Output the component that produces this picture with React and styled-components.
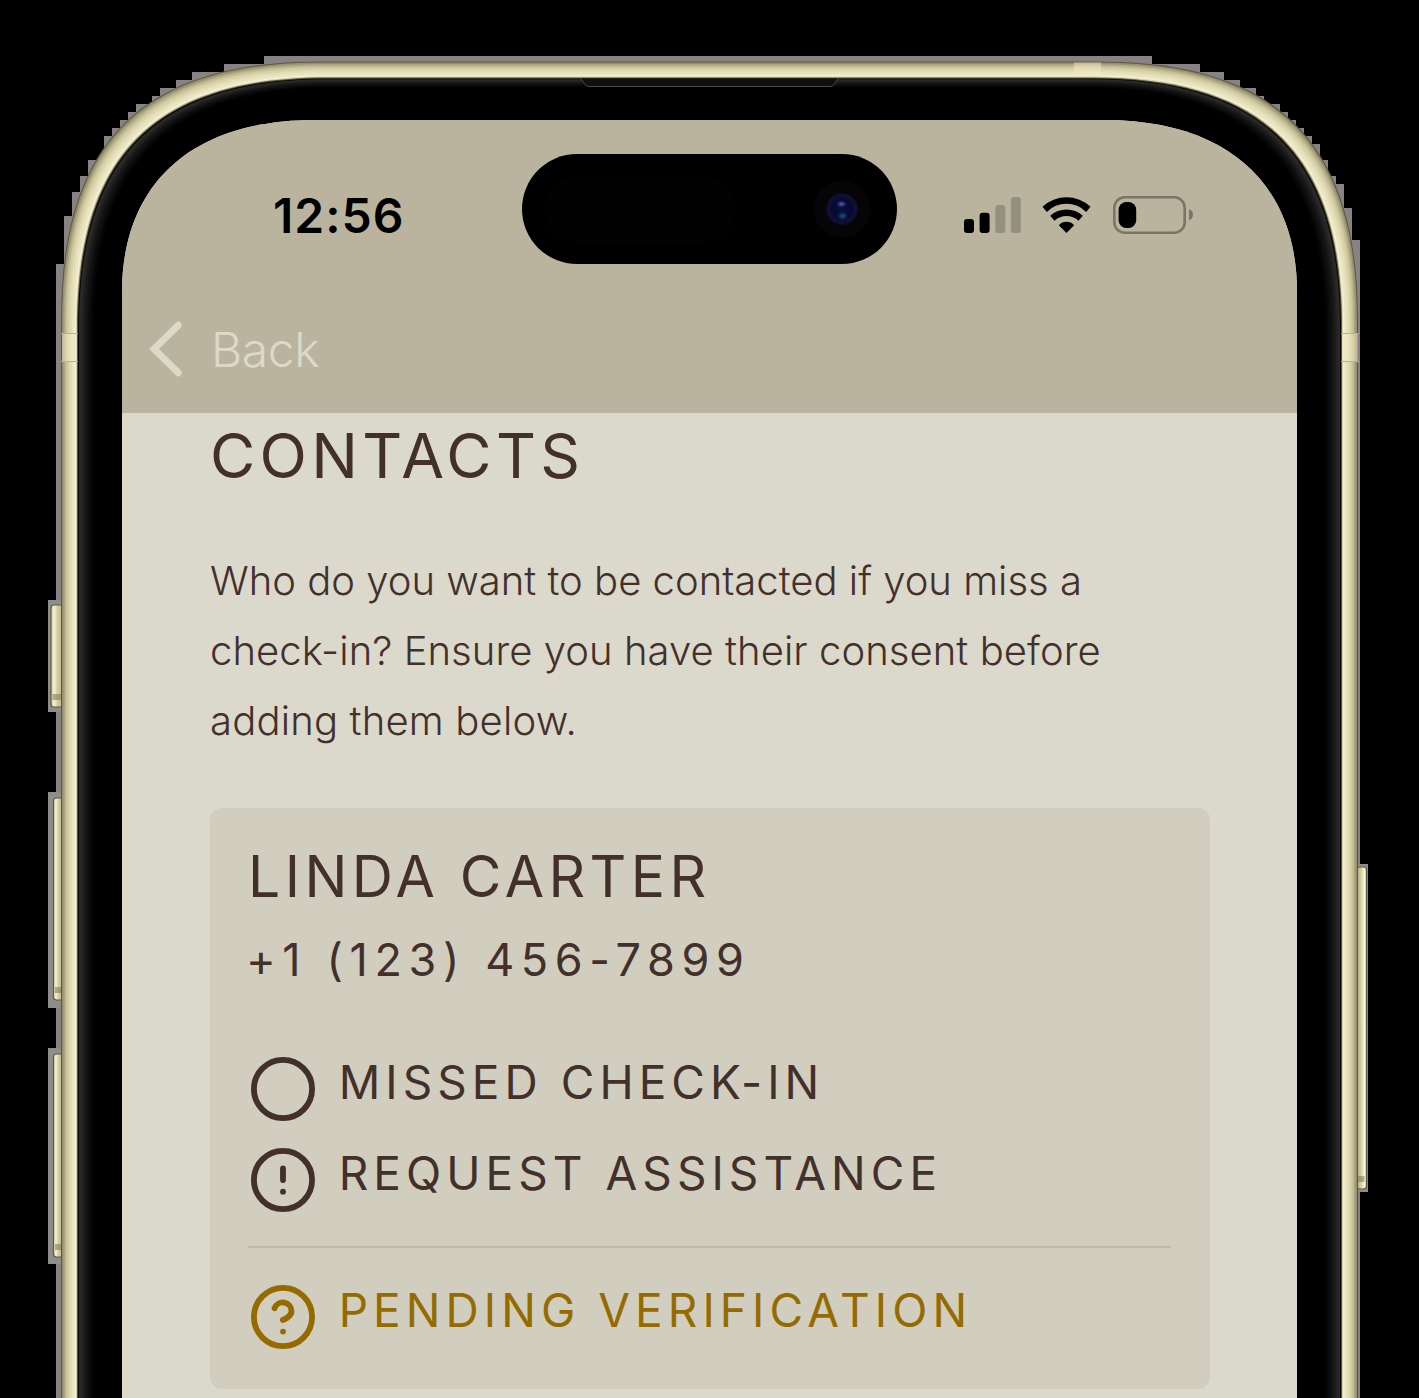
import React from 'react';
import styled, { createGlobalStyle } from 'styled-components';

const color = {
  header: '#bab49f',
  page: '#dbd8cc',
  card: '#d1cec0',
  ink: '#43302b',
  light: '#dcd9c9',
  pending: '#956b00',
  rule: '#bebbac',
};

const GlobalStyle = createGlobalStyle`
  * { box-sizing: border-box; }
  body {
    margin: 0;
    background: #000;
    overflow: hidden;
    font-family: Inter, "Liberation Sans", sans-serif;
  }
`;

const Stage = styled.main`
  position: relative;
  width: 1419px;
  height: 1398px;
  padding: 120px 122px 0;
  overflow: hidden;
  background: #000;
`;

const Backdrop = styled.svg`
  position: absolute;
  inset: 0;
  display: block;
`;

const Screen = styled.div`
  position: relative;
  height: 1278px;
  overflow: hidden;
  background: ${color.page};
  clip-path: path('M0 1278V172C0 68 65 0 193 0H982C1110 0 1175 68 1175 172V1278Z');
`;

const Header = styled.header`
  height: 293px;
  padding-top: 34px;
  background: ${color.header};
`;

const StatusBar = styled.div`
  display: grid;
  grid-template-columns: 400px 375px 400px;
  height: 110px;
`;

const StatusSlot = styled.div`
  display: flex;
  align-items: center;
  gap: ${(p) => p.$gap || 0}px;
  padding-top: ${(p) => p.$top}px;
  padding-left: ${(p) => p.$left}px;
`;

const Time = styled.time`
  font-size: 48px;
  font-weight: 600;
  line-height: 60px;
  letter-spacing: 1px;
  color: #000;
`;

const Island = styled.div`
  display: flex;
  align-items: center;
  justify-content: space-between;
  padding: 0 26px 0 22px;
  border-radius: 55px;
  background: #000;
`;

const Sensor = styled.span`
  width: 192px;
  height: 66px;
  border-radius: 33px;
  background: #020202;
`;

const Glyph = styled.svg`
  display: block;
  flex: none;
  overflow: visible;
`;

const BackButton = styled.button`
  display: flex;
  align-items: center;
  gap: 27px;
  height: 60px;
  margin: 55px 0 0 26px;
  padding: 0;
  border: 0;
  background: none;
  color: ${color.light};
  font: 350 48px/60px Inter, "Liberation Sans", sans-serif;
  letter-spacing: -0.4px;
`;

const BackLabel = styled.span`
  padding-top: 2px;
`;

const Content = styled.section`
  padding: 5px 87px 0 88px;
  color: ${color.ink};
`;

const Title = styled.h1`
  margin: 0 0 52px;
  font-size: 62px;
  font-weight: 400;
  line-height: 76px;
  letter-spacing: 4.3px;
`;

const Intro = styled.p`
  margin: 0 0 52px;
  font-size: 40px;
  font-weight: 300;
  line-height: 70px;
`;

const Line = styled.span`
  display: block;
  white-space: nowrap;
  letter-spacing: ${(p) => p.$track}px;
`;

const Card = styled.article`
  display: flex;
  flex-direction: column;
  height: 581px;
  padding: 34px 39px 0 38px;
  border-radius: 12px;
  background: ${color.card};
`;

const Name = styled.h2`
  margin: 0 0 18px;
  font-size: 57px;
  font-weight: 400;
  line-height: 70px;
  letter-spacing: 4.45px;
`;

const Phone = styled.div`
  margin: 0 0 67px -2px;
  font-size: 45px;
  line-height: 60px;
  letter-spacing: 6.6px;
`;

const Option = styled.div`
  display: flex;
  align-items: flex-start;
  gap: 24px;
  height: 64px;
  padding-left: 2.7px;
  margin-bottom: ${(p) => p.$after || 0}px;
  color: ${(p) => p.$color || color.ink};
`;

const OptionLabel = styled.span`
  margin-top: -7px;
  font-size: 46px;
  line-height: 64px;
  letter-spacing: 5.05px;
  white-space: nowrap;
`;

const Divider = styled.hr`
  width: 100%;
  height: 2px;
  margin: 0 0 37px;
  border: 0;
  background: ${color.rule};
`;

// Outline of the body, inset from the outer edge by x on the sides and y on top.
function bodyPath(x, y) {
  const l = 61 + x;
  const t = 61.5 + y;
  const r = 1419 - l;
  const cx = 142 + (14 / 17) * x;
  const cy = 142 + (14 / 17) * y;
  const ex = 320 + 0.4 * x;
  const ey = 320 + 0.4 * y;
  return `M${l} 1400V${ey}C${l} ${cy} ${cx} ${t} ${ex} ${t}H${1419 - ex}C${1419 - cx} ${t} ${r} ${cy} ${r} ${ey}V1400Z`;
}

const metal = [
  [0, '#5d5941'], [1, '#968f6d'], [2.5, '#aca580'], [4, '#c0b991'],
  [5.5, '#cfc8a0'], [7, '#d9d3ab'], [9, '#e3ddb8'], [11, '#eae4c2'],
  [13.5, '#f5f0d4'], [15, '#d4cea6'], [16, '#5c583c'], [17, '#050505'],
];

const glow = [
  '#2a2a2b', '#2a2a2b', '#262627', '#202021', '#1c1c1d', '#181819', '#141415',
  '#111112', '#0e0e0f', '#0b0b0c', '#080809', '#050506', '#030303', '#000000',
];

const haloLeft = [
  [264, 56], [224, 64], [192, 72], [176, 80], [160, 88], [152, 96], [136, 104],
  [128, 112], [120, 120], [112, 128], [104, 136], [104, 144], [88, 160],
  [80, 176], [72, 192], [64, 216], [56, 264],
];
const haloRight = [
  [1152, 56], [1200, 64], [1224, 72], [1240, 80], [1256, 88], [1264, 96],
  [1280, 104], [1288, 112], [1296, 120], [1304, 128], [1312, 136], [1320, 144],
  [1328, 160], [1336, 176], [1344, 184], [1352, 208], [1360, 240],
];
function haloPath() {
  const steps = (points) => points.map(([x, y]) => `V${y}H${x}`).join('');
  return `M710 56${steps(haloLeft)}V1398H710ZM710 56${steps(haloRight)}V1398H710Z`;
}

const keys = [
  { x: 50.5, y: 605, w: 13, h: 102, halo: [48, 600, 112], side: 'left' },
  { x: 53, y: 798, w: 10, h: 202, halo: [48, 792, 216], side: 'left' },
  { x: 53, y: 1054, w: 10, h: 203, halo: [48, 1048, 216], side: 'left' },
  { x: 1356, y: 867, w: 10, h: 322, halo: [1352, 864, 328], side: 'right' },
];

function DeviceBody() {
  return (
    <Backdrop width="1419" height="1398" viewBox="0 0 1419 1398" aria-hidden="true">
      <defs>
        <linearGradient id="left">
          <stop offset="0" stopColor="#d5cfab" />
          <stop offset=".25" stopColor="#f4efcf" />
          <stop offset=".5" stopColor="#d3cda3" />
          <stop offset="1" stopColor="#b7b087" />
        </linearGradient>
        <linearGradient id="right">
          <stop offset="0" stopColor="#aaa47c" />
          <stop offset=".45" stopColor="#d3cda3" />
          <stop offset=".8" stopColor="#fbf8de" />
          <stop offset="1" stopColor="#d5cfab" />
        </linearGradient>
      </defs>
      <path d={haloPath()} fill="#878385" />
      {keys.map((k) => (
        <g key={k.y}>
          <rect x={k.halo[0]} y={k.halo[1]} width="16" height={k.halo[2]} fill="#8f8c8c" />
          <rect x={k.x + 0.5} y={k.y} width={k.w} height={k.h} rx="3" fill={`url(#${k.side})`} stroke="#5f5b42" strokeWidth="1.2" />
          <rect x={k.side === 'left' ? k.x + 2 : k.x + 1} y={k.y + k.h - 13} width={k.w - 2.5} height="6" fill="#7b7554" opacity=".55" />
        </g>
      ))}
      {metal.map(([o, fill]) => <path key={o} d={bodyPath(o, o)} fill={fill} />)}
      <g fill="#f1e9c3" opacity=".5">
        <rect x="62" y="334" width="15" height="27" />
        <rect x="1342" y="334" width="16" height="27" />
        <rect x="1074" y="62.5" width="27" height="14" />
      </g>
      <path d="M61 333.5H78M61 361.5H78M1341 333.5H1359M1341 361.5H1359" stroke="#b9b28b" strokeWidth="1" />
      {glow.map((fill, i) => (
        <path key={i} d={bodyPath(18 + i * 1.15, 17.8 + i * 0.65)} fill={fill} />
      ))}
      <path d="M580 78.5H839C835 79.5 836 86.5 830 86.5H590C583 86.5 584 79.5 580 78.5Z" fill="#111011" />
      <path d="M580 78.5C584 79.5 583 86.5 590 86.5H830C836 86.5 835 79.5 839 78.5" fill="none" stroke="#4b4849" strokeWidth="1" />
    </Backdrop>
  );
}

function Camera() {
  return (
    <Glyph width="58" height="58" viewBox="0 0 58 58">
      <defs>
        <radialGradient id="lens">
          <stop offset="0" stopColor="#07103a" />
          <stop offset=".6" stopColor="#060930" />
          <stop offset=".85" stopColor="#121035" />
          <stop offset="1" stopColor="#0c0a1e" />
        </radialGradient>
        <radialGradient id="glintTop">
          <stop offset="0" stopColor="#6a68c8" />
          <stop offset="1" stopColor="#24248a" stopOpacity="0" />
        </radialGradient>
        <radialGradient id="glintBottom">
          <stop offset="0" stopColor="#1d5a80" />
          <stop offset="1" stopColor="#16286e" stopOpacity="0" />
        </radialGradient>
      </defs>
      <circle cx="29" cy="29" r="28.5" fill="#060407" />
      <circle cx="29" cy="29" r="16" fill="url(#lens)" />
      <ellipse cx="28.5" cy="24" rx="6" ry="4" fill="url(#glintTop)" />
      <ellipse cx="29.5" cy="36" rx="6" ry="5" fill="url(#glintBottom)" />
    </Glyph>
  );
}

function Signal() {
  return (
    <Glyph width="57" height="38" viewBox="0 0 57 38">
      <rect x="0" y="23" width="10" height="14" rx="3" />
      <rect x="15.6" y="16.7" width="10" height="20.3" rx="3" />
      <g fill="#94907e">
        <rect x="31.3" y="9" width="10" height="28" rx="3" />
        <rect x="46.8" y="1" width="10" height="36" rx="3" />
      </g>
    </Glyph>
  );
}

function Wifi() {
  return (
    <Glyph width="49" height="38" viewBox="0 -1 48.7 38">
      <path d="M0.3 9.7A35.3 35.3 0 0 1 48.4 9.7L44 15A27.3 27.3 0 0 0 4.7 15Z" />
      <path d="M8 18.7A25 25 0 0 1 40.7 18.7L36.3 23.7A17.7 17.7 0 0 0 12.4 23.7Z" />
      <path d="M16.7 28.3A9.8 9.8 0 0 1 32 28.3L24.3 36Z" />
    </Glyph>
  );
}

function Battery() {
  return (
    <Glyph width="80" height="38" viewBox="0 0 80 38">
      <rect x="1.3" y="1.3" width="70.4" height="35.4" rx="10.5" fill="none" stroke="#7b7565" strokeWidth="2.6" />
      <rect x="5.6" y="6" width="17.6" height="26" rx="7.8" />
      <path d="M76 13.3C81.3 14.5 81.3 23 76 24.2Z" fill="#7b7565" />
    </Glyph>
  );
}

function RoundIcon({ children }) {
  return (
    <Glyph width="64" height="64" viewBox="1 1 22 22" fill="none" stroke="currentColor" strokeWidth="2" strokeLinecap="round" strokeLinejoin="round">
      <circle cx="12" cy="12" r="10" />
      {children}
    </Glyph>
  );
}

export default function App() {
  return (
    <>
      <GlobalStyle />
      <Stage>
        <DeviceBody />
        <Screen>
          <Header>
            <StatusBar>
              <StatusSlot $left={151} $top={14}><Time>12:56</Time></StatusSlot>
              <Island><Sensor /><Camera /></Island>
              <StatusSlot $left={67.2} $top={12} $gap={21.3}>
                <Signal />
                <Wifi />
                <Battery />
              </StatusSlot>
            </StatusBar>
            <BackButton>
              <Glyph width="36" height="60" viewBox="0 0 36 60" fill="none" stroke="currentColor" strokeWidth="6.8" strokeLinecap="round">
                <path d="M30.3 6.2L6 30L30.3 53.8" />
              </Glyph>
              <BackLabel>Back</BackLabel>
            </BackButton>
          </Header>
          <Content>
            <Title>CONTACTS</Title>
            <Intro>
              <Line $track={0}>Who do you want to be contacted if you miss a</Line>
              <Line $track={0.06}>check-in? Ensure you have their consent before</Line>
              <Line $track={0.18}>adding them below.</Line>
            </Intro>
            <Card>
              <Name>LINDA CARTER</Name>
              <Phone>+1 (123) 456-7899</Phone>
              <Option $after={26.5}>
                <RoundIcon />
                <OptionLabel>MISSED CHECK-IN</OptionLabel>
              </Option>
              <Option $after={34.5}>
                <RoundIcon><path d="M12 8v4M12 16h.01" /></RoundIcon>
                <OptionLabel>REQUEST ASSISTANCE</OptionLabel>
              </Option>
              <Divider />
              <Option $color={color.pending}>
                <RoundIcon><path d="M9.09 9a3 3 0 0 1 5.83 1c0 2-3 3-3 3M12 17h.01" /></RoundIcon>
                <OptionLabel>PENDING VERIFICATION</OptionLabel>
              </Option>
            </Card>
          </Content>
        </Screen>
      </Stage>
    </>
  );
}
